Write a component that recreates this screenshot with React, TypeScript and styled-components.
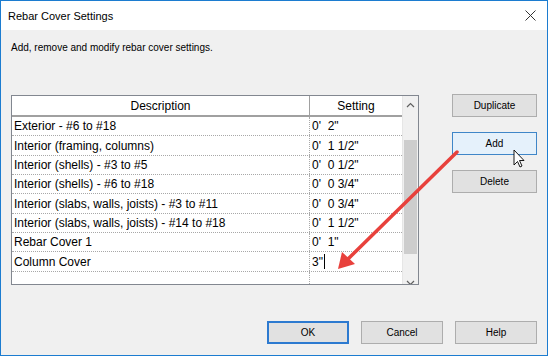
import styled, { createGlobalStyle } from 'styled-components'

const GlobalStyle = createGlobalStyle`
  html, body {
    margin: 0;
    padding: 0;
    background: #ffffff;
  }
  body {
    font-family: 'Liberation Sans', Arial, sans-serif;
    font-size: 12px;
    color: #000;
  }
`

const Window = styled.div`
  position: relative;
  width: 548px;
  height: 356px;
  box-sizing: border-box;
  border: 1px solid #1c7cd0;
  background: #f0f0f0;
  display: flex;
  flex-direction: column;
  overflow: hidden;
`

const TitleBar = styled.div`
  height: 29px;
  background: #ffffff;
  display: flex;
  align-items: center;
  justify-content: space-between;
  padding: 0 11px 0 7px;
  font-size: 11px;
`

const Body = styled.div`
  flex: 1;
  display: flex;
  flex-direction: column;
  padding: 10px 10px 11px 10px;
`

const Intro = styled.div`
  height: 16px;
  line-height: 16px;
  font-size: 10px;
`

const MainRow = styled.div`
  display: flex;
  margin-top: 39px;
`

const Table = styled.div`
  width: 408px;
  height: 190px;
  box-sizing: border-box;
  border: 1px solid #828790;
  background: #ffffff;
  display: grid;
  grid-template-columns: 298px 92px 16px;
  grid-template-rows: 21px 1fr;
  overflow: hidden;
`

const HeadCell = styled.div<{ $last?: boolean }>`
  display: flex;
  align-items: center;
  justify-content: center;
  border-bottom: 2px solid #a0a0a0;
  border-right: ${p => (p.$last ? 'none' : '1px solid #a0a0a0')};
  box-sizing: border-box;
  font-size: 12px;
`

const Rows = styled.div`
  grid-column: 1 / 3;
  display: flex;
  flex-direction: column;
`

const Row = styled.div`
  display: grid;
  grid-template-columns: 298px 92px;
  height: 19.35px;
  border-bottom: 1px dotted #a8a8a8;
  box-sizing: border-box;
`

const Cell = styled.div<{ $setting?: boolean }>`
  display: flex;
  align-items: center;
  padding-left: 2px;
  white-space: pre;
  font-size: 12px;
  box-sizing: border-box;
  border-right: ${p => (p.$setting ? 'none' : '1px dotted #a8a8a8')};
`

const Caret = styled.span`
  display: inline-block;
  width: 1px;
  height: 15px;
  background: #000;
  margin-left: 1px;
`

const Scrollbar = styled.div`
  grid-column: 3;
  grid-row: 1 / 3;
  background: #f0f0f0;
  display: flex;
  flex-direction: column;
  align-items: center;
  border-left: 1px solid #e6e6e6;
`

const ScrollArrow = styled.div`
  height: 17px;
  width: 100%;
  display: flex;
  align-items: center;
  justify-content: center;
`

const ScrollTrack = styled.div`
  flex: 1;
  width: 100%;
  padding: 27px 0 20px;
  box-sizing: border-box;
  display: flex;
`

const Thumb = styled.div`
  flex: 1;
  margin: 0 1px;
  background: #cdcdcd;
`

const SideButtons = styled.div`
  display: flex;
  flex-direction: column;
  gap: 15px;
  margin-left: 33px;
  margin-top: -1px;
`

const Button = styled.div<{ $focused?: boolean; $hover?: boolean; $w?: number }>`
  width: ${p => p.$w ?? 85}px;
  height: 23px;
  box-sizing: border-box;
  display: flex;
  align-items: center;
  justify-content: center;
  font-size: 10px;
  background: ${p => (p.$hover ? '#e5f1fb' : '#e1e1e1')};
  border: ${p =>
    p.$focused ? '2px solid #2d7ad0' : p.$hover ? '1px solid #3f86c8' : '1px solid #adadad'};
`

const Footer = styled.div`
  margin-top: auto;
  display: flex;
  justify-content: flex-end;
  gap: 12px;
`

const Overlay = styled.svg`
  position: absolute;
  left: 0;
  top: 0;
  pointer-events: none;
`

const rows = [
  ['Exterior - #6 to #18', `0'  2"`],
  ['Interior (framing, columns)', `0'  1 1/2"`],
  ['Interior (shells) - #3 to #5', `0'  0 1/2"`],
  ['Interior (shells) - #6 to #18', `0'  0 3/4"`],
  ['Interior (slabs, walls, joists) - #3 to #11', `0'  0 3/4"`],
  ['Interior (slabs, walls, joists) - #14 to #18', `0'  1 1/2"`],
  ['Rebar Cover 1', `0'  1"`],
]

const App = () => {
  return (
    <>
      <GlobalStyle />
      <Window>
        <TitleBar>
          <span>Rebar Cover Settings</span>
          <svg width="11" height="11" viewBox="0 0 11 11">
            <path d="M0.5 0.5 L10.5 10.5 M10.5 0.5 L0.5 10.5" stroke="#333" strokeWidth="1" />
          </svg>
        </TitleBar>
        <Body>
          <Intro>Add, remove and modify rebar cover settings.</Intro>
          <MainRow>
            <Table>
              <HeadCell>Description</HeadCell>
              <HeadCell $last>Setting</HeadCell>
              <Scrollbar>
                <ScrollArrow>
                  <svg width="9" height="6" viewBox="0 0 9 6">
                    <path d="M1 5 L4.5 1.5 L8 5" fill="none" stroke="#606060" strokeWidth="1.2" />
                  </svg>
                </ScrollArrow>
                <ScrollTrack>
                  <Thumb />
                </ScrollTrack>
                <ScrollArrow>
                  <svg width="9" height="6" viewBox="0 0 9 6">
                    <path d="M1 1 L4.5 4.5 L8 1" fill="none" stroke="#606060" strokeWidth="1.2" />
                  </svg>
                </ScrollArrow>
              </Scrollbar>
              <Rows>
                {rows.map(([desc, setting], i) => (
                  <Row key={i}>
                    <Cell>{desc}</Cell>
                    <Cell $setting>{setting}</Cell>
                  </Row>
                ))}
                <Row>
                  <Cell>Column Cover</Cell>
                  <Cell $setting>
                    3"
                    <Caret />
                  </Cell>
                </Row>
                <Row>
                  <Cell />
                  <Cell $setting />
                </Row>
              </Rows>
            </Table>
            <SideButtons>
              <Button>Duplicate</Button>
              <Button $hover>Add</Button>
              <Button>Delete</Button>
            </SideButtons>
          </MainRow>
          <Footer>
            <Button $focused $w={82}>OK</Button>
            <Button $w={82}>Cancel</Button>
            <Button $w={82}>Help</Button>
          </Footer>
        </Body>
        <Overlay width="548" height="356" viewBox="0 0 548 356">
          <line x1="456" y1="151" x2="347" y2="258" stroke="#e8413c" strokeWidth="3.5" strokeLinecap="round" />
          <polygon points="337,268 341,251 354,263" fill="#e8413c" />
          <path
            d="M513 149 L513 164 L516.5 160.5 L519 166 L521 165 L518.5 159.5 L523 159.5 Z"
            fill="#ffffff"
            stroke="#000000"
            strokeWidth="0.9"
            strokeLinejoin="round"
          />
        </Overlay>
      </Window>
    </>
  )
}

export default App
